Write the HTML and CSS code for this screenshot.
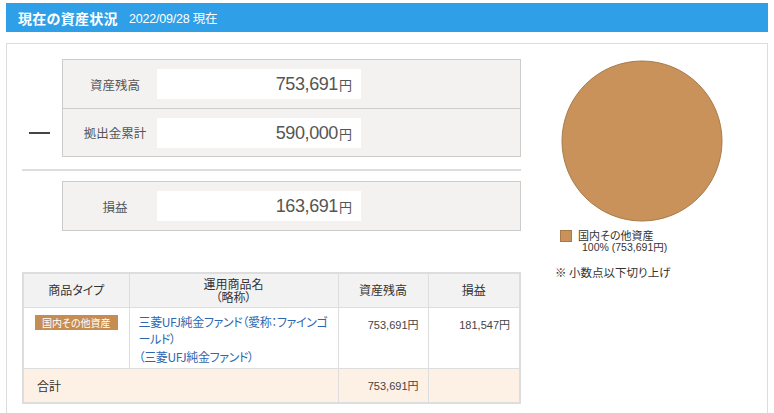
FILE: index.html
```html
<!DOCTYPE html>
<html lang="ja">
<head>
<meta charset="utf-8">
<title>現在の資産状況</title>
<link rel="stylesheet" href="styles.css">
</head>
<body>
<div class="titlebar">
  <h1 class="title">現在の資産状況</h1>
  <span class="date">2022/09/28 現在</span>
</div>
<div class="content">
  <div class="left">
    <div class="calc">
      <div class="op"><span class="minus"></span></div>
      <div class="panel">
        <div class="row">
          <div class="label">資産残高</div>
          <div class="value">753,691<span class="yen">円</span></div>
        </div>
        <div class="row">
          <div class="label">拠出金累計</div>
          <div class="value">590,000<span class="yen">円</span></div>
        </div>
      </div>
    </div>
    <div class="sep"></div>
    <div class="calc">
      <div class="op"></div>
      <div class="panel">
        <div class="row">
          <div class="label">損益</div>
          <div class="value">163,691<span class="yen">円</span></div>
        </div>
      </div>
    </div>
    <table class="funds">
      <thead>
        <tr>
          <th class="c1">商品タイプ</th>
          <th class="c2"><span class="hl">運用商品名</span><span class="hl">（略称）</span></th>
          <th class="c3">資産残高</th>
          <th class="c4">損益</th>
        </tr>
      </thead>
      <tbody>
        <tr class="item">
          <td class="type"><span class="tag">国内その他資産</span></td>
          <td class="name"><a href="#">三菱UFJ純金ファンド（愛称：ファインゴールド）<br>（三菱UFJ純金ファンド）</a></td>
          <td class="num">753,691円</td>
          <td class="num">181,547円</td>
        </tr>
        <tr class="total">
          <td colspan="2" class="totlabel">合計</td>
          <td class="num">753,691円</td>
          <td></td>
        </tr>
      </tbody>
    </table>
  </div>
  <div class="right">
    <svg class="pie" width="162" height="162" viewBox="0 0 162 162">
      <circle cx="81" cy="81" r="80" fill="#c8925a" stroke="#a87a4a" stroke-width="1"/>
    </svg>
    <div class="legend">
      <span class="swatch"></span>
      <div class="legtext">
        <div class="legname">国内その他資産</div>
        <div class="pct">100% (753,691円)</div>
      </div>
    </div>
    <p class="note">※ 小数点以下切り上げ</p>
  </div>
</div>
</body>
</html>
```

FILE: styles.css
```css
* { box-sizing: border-box; }
html, body { margin: 0; padding: 0; background: #fff; }
body {
  font-family: "Noto Sans CJK JP", "Noto Sans", sans-serif;
  color: #333;
  font-feature-settings: "palt";
}
.titlebar {
  margin: 3px 6px 0;
  height: 29px;
  background: #2f9fe7;
  display: flex;
  align-items: center;
  padding-left: 12px;
  color: #fff;
}
.title {
  margin: 0;
  font-size: 14px;
  font-weight: bold;
  letter-spacing: 0.3px;
}
.date {
  margin-left: 11px;
  font-size: 12.5px;
  font-family: "Liberation Sans", "Noto Sans CJK JP", sans-serif;
  letter-spacing: -0.2px;
}
.content {
  margin: 11px 6px 0;
  border: 1px solid #ddd;
  border-bottom: none;
  height: 370px;
  display: flex;
  padding: 15px 0 0 15px;
}
.left { width: 499px; flex: none; }
.calc { display: flex; }
.op {
  width: 40px;
  flex: none;
  align-self: flex-end;
  height: 49px;
  display: flex;
  align-items: center;
  padding-left: 7px;
}
.minus {
  display: block;
  width: 21px;
  height: 2px;
  background: #444;
}
.panel {
  flex: 1;
  background: #f3f2f1;
  border: 1px solid #ccc;
}
.row {
  display: flex;
  align-items: center;
  height: 48px;
}
.row + .row { border-top: 1px solid #ccc; height: 48px; }
.label {
  width: 94px;
  padding-left: 10px;
  text-align: center;
  font-size: 12.5px;
  color: #555;
}
.value {
  width: 204px;
  height: 30px;
  background: #fff;
  text-align: right;
  padding-right: 9px;
  font-family: "Liberation Sans", sans-serif;
  font-size: 18px;
  line-height: 30px;
  color: #555;
  letter-spacing: -0.4px;
}
.yen {
  font-family: "Noto Sans CJK JP", sans-serif;
  font-size: 13px;
  margin-left: 1px;
  letter-spacing: 0;
}
.sep {
  height: 2px;
  background: #ddd;
  margin: 12px 0 10px;
}
.funds {
  margin-top: 41px;
  width: 499px;
  border-collapse: collapse;
  border: 2px solid #ddd;
  font-size: 12px;
}
.funds th, .funds td {
  border: 1px solid #ddd;
}
.funds th {
  background: #f2f2f2;
  font-weight: normal;
  height: 34px;
  line-height: 14px;
  padding: 1px 4px;
  color: #333;
}
.hl { display: block; line-height: 13px; }
.c1 { width: 106px; }
.c2 { width: 209px; }
.c3 { width: 90px; }
.item td {
  vertical-align: top;
  height: 60px;
  padding: 5px 9px 3px;
}
.type { text-align: center; }
.tag {
  display: inline-block;
  background: #c68d52;
  color: #fff;
  font-size: 10px;
  line-height: 15px;
  padding: 0 7px;
  margin-top: 2px;
}
.item .name { padding-right: 5px; }
.name a {
  color: #2d67b0;
  text-decoration: none;
  font-size: 12px;
  line-height: 16.5px;
  letter-spacing: -0.35px;
}
.num {
  text-align: right;
  font-family: "Liberation Sans", "Noto Sans CJK JP", sans-serif;
  font-size: 11px;
  color: #444;
}
.item .num { padding-top: 8px; }
.total td {
  background: #fdf0e5;
  height: 34px;
  padding: 0 9px;
  vertical-align: middle;
}
.totlabel { padding-left: 13px !important; font-size: 12px; }
.right {
  flex: 1;
  padding-left: 40px;
  padding-top: 1px;
}
.pie { display: block; }
.legend {
  display: flex;
  align-items: flex-start;
  margin-top: 7px;
  margin-left: -1px;
  font-size: 11px;
  color: #333;
}
.legname { line-height: 12px; }
.swatch {
  width: 12px;
  height: 12px;
  background: #c8925a;
  border: 1px solid #a87a4a;
  margin-top: 1px;
  margin-right: 6px;
  flex: none;
}
.pct {
  padding-left: 4px;
  font-family: "Liberation Sans", "Noto Sans CJK JP", sans-serif;
  font-size: 10.5px;
  line-height: 13px;
}
.note {
  margin: 10px 0 0 -6px;
  font-size: 11.5px;
  color: #333;
}
```
